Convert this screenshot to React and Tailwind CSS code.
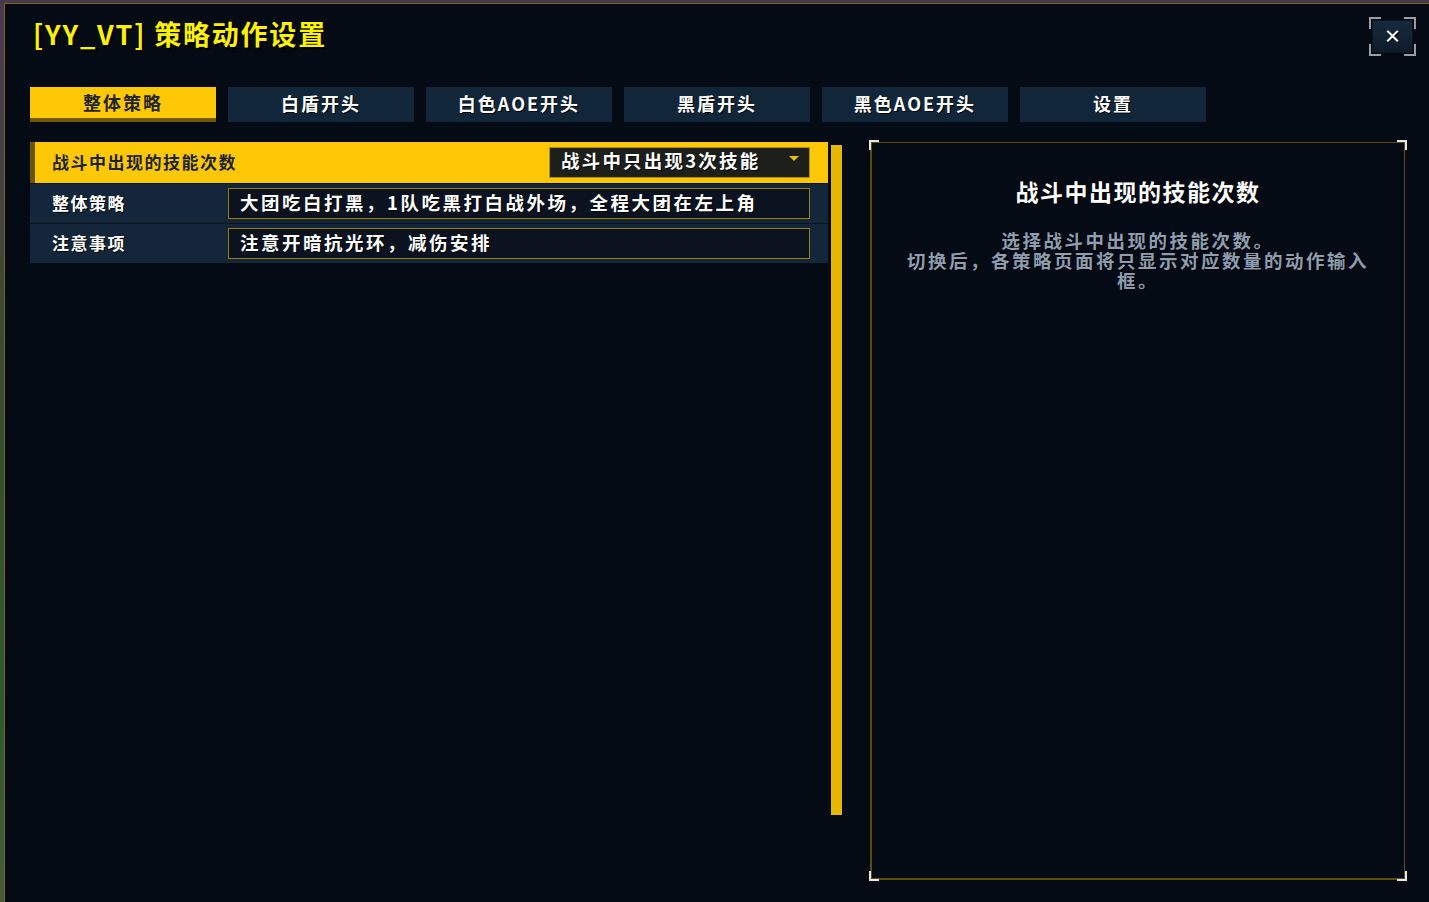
import { useState } from 'react';

const FONT = "font-['Noto_Sans_CJK_SC','Noto_Sans',sans-serif]";

const tabs = ['整体策略', '白盾开头', '白色AOE开头', '黑盾开头', '黑色AOE开头', '设置'];

const Corner = ({ pos }) => {
    const map = {
        tl: 'top-[-3px] left-[-3px] border-t-2 border-l-2',
        tr: 'top-[-3px] right-[-3px] border-t-2 border-r-2',
        bl: 'bottom-[-3px] left-[-3px] border-b-2 border-l-2',
        br: 'bottom-[-3px] right-[-3px] border-b-2 border-r-2',
    };
    return <span className={`absolute w-[10px] h-[10px] border-[#e6e8ea] ${map[pos]}`} />;
};

const TextRow = ({ label, value }) => (
    <div className="flex items-center h-[39px] bg-[#13263a]">
        <div className="w-[198px] pl-[22px] pb-[2px] whitespace-nowrap text-[17px] font-bold tracking-[1.5px] text-white [text-shadow:1px_1px_0_#000]">
            {label}
        </div>
        <div className="flex items-center w-[582px] h-[31px] pl-[11px] pb-[2px] whitespace-nowrap border border-[#9c7c00] bg-[#0b1320] text-[18.5px] font-bold tracking-[2.5px] text-white [text-shadow:1px_1px_0_#000]">
            {value}
        </div>
    </div>
);

export default function App() {
    const [active, setActive] = useState(0);

    return (
        <div className={`w-[1429px] h-[902px] overflow-hidden pl-[4px] pt-[3px] bg-[linear-gradient(180deg,#4a3850_0%,#3c4a34_40%,#2f5a2c_80%,#4a5a3a_100%)] ${FONT}`}>
            <div className="relative h-full border-l border-t border-[#7a6418] bg-[#050b14]">
                {/* header */}
                <div className="pl-[28px] pt-[10px] text-[27px] leading-[40px] font-bold tracking-[1.8px] text-[#fff200] [text-shadow:2px_2px_0_#000]">
                    [YY_VT] 策略动作设置
                </div>

                <button className="absolute top-[13px] right-[13px] w-[47px] h-[39px] flex items-center justify-center">
                    <span className="absolute top-0 left-0 w-[12px] h-[12px] border-t-2 border-l-2 border-[#9a9ea4]" />
                    <span className="absolute top-0 right-0 w-[12px] h-[12px] border-t-2 border-r-2 border-[#9a9ea4]" />
                    <span className="absolute bottom-0 left-0 w-[12px] h-[12px] border-b-2 border-l-2 border-[#9a9ea4]" />
                    <span className="absolute bottom-0 right-0 w-[12px] h-[12px] border-b-2 border-r-2 border-[#9a9ea4]" />
                    <span className="absolute inset-[3px] bg-[linear-gradient(180deg,#172a3c,#0e1c2a)] border border-[#0a141e]" />
                    <span className="relative pb-[3px] text-[18px] font-bold leading-none text-white [text-shadow:1px_1px_0_#000]">×</span>
                </button>

                {/* tabs */}
                <div className="flex gap-[12px] pl-[25px] mt-[33px]">
                    {tabs.map((t, i) => (
                        <button
                            key={t}
                            onClick={() => setActive(i)}
                            className={`w-[186px] h-[35px] flex items-center justify-center text-[18px] font-bold tracking-[2px] ${
                                i === active
                                    ? 'bg-[#ffc807] border-b-4 border-[#735800] text-[#1e2430]'
                                    : 'bg-[#12263a] pb-[3px] text-white [text-shadow:1px_1px_0_#000]'
                            }`}
                        >
                            {t}
                        </button>
                    ))}
                </div>

                {/* body */}
                <div className="flex items-start pl-[25px] mt-[20px]">
                    <div className="w-[798px] flex flex-col gap-[1px] bg-[#0a1420]">
                        <div className="flex items-center h-[41px] bg-[#ffc807] border-l-[5px] border-[#6e5400]">
                            <div className="w-[220px] pl-[17px] pb-[2px] whitespace-nowrap text-[17px] font-bold tracking-[1.5px] text-[#1c2432]">
                                战斗中出现的技能次数
                            </div>
                            <div className="ml-auto mr-[18px] flex items-center w-[261px] h-[31px] pl-[11px] pr-[10px] border border-[#b08c00] bg-[#1d1f1b] text-[18.5px] font-bold tracking-[2.2px] text-white [text-shadow:1px_1px_0_#000]">
                                <span className="pb-[3px] whitespace-nowrap">战斗中只出现3次技能</span>
                                <span className="ml-auto mb-[8px] w-0 h-0 border-l-[5px] border-r-[5px] border-t-[5px] border-l-transparent border-r-transparent border-t-[#e8c000]" />
                            </div>
                        </div>
                        <TextRow label="整体策略" value="大团吃白打黑，1队吃黑打白战外场，全程大团在左上角" />
                        <TextRow label="注意事项" value="注意开暗抗光环，减伤安排" />
                    </div>

                    <div className="ml-[3px] mt-[3px] w-[11px] h-[670px] bg-[#e6b600]" />

                    <div className="relative ml-[28px] w-[535px] h-[738px] border-2 border-t border-r border-[#5e4b0e] px-[28px]">
                        <Corner pos="tl" />
                        <Corner pos="tr" />
                        <Corner pos="bl" />
                        <Corner pos="br" />
                        <div className="mt-[32px] text-center text-[23px] leading-[32px] font-bold tracking-[1.5px] text-white [text-shadow:1px_1px_0_#000]">
                            战斗中出现的技能次数
                        </div>
                        <div className="mt-[23px] text-center text-[18.5px] leading-[20px] font-bold tracking-[2.5px] text-[#8e9db0] [text-shadow:1px_1px_0_#000]">
                            选择战斗中出现的技能次数。
                            <br />
                            切换后，各策略页面将只显示对应数量的动作输入框。
                        </div>
                    </div>
                </div>
            </div>
        </div>
    );
}
